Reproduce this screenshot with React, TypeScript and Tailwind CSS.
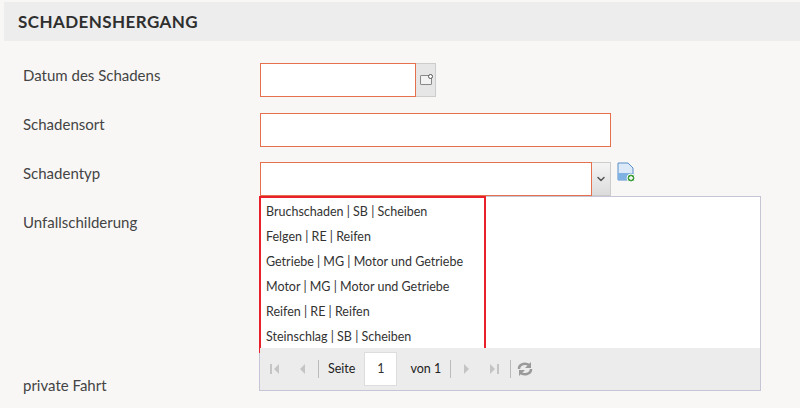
import { ChevronDown } from 'lucide-react'

const items = [
  'Bruchschaden | SB | Scheiben',
  'Felgen | RE | Reifen',
  'Getriebe | MG | Motor und Getriebe',
  'Motor | MG | Motor und Getriebe',
  'Reifen | RE | Reifen',
  'Steinschlag | SB | Scheiben'
]

function PagerBtn({ children }: { children: React.ReactNode }) {
  return (
    <div className="flex h-[22px] w-[22px] items-center justify-center rounded-sm text-[#c4c4c4]">
      {children}
    </div>
  )
}

export default function App() {
  return (
    <div className="h-[408px] w-[800px] overflow-hidden bg-[#f8f7f6] pl-1 pt-[2px] [font-family:Lato,sans-serif] text-[#444]">
      <div className="flex h-[39px] items-center bg-[#ededed] pl-[14px] text-[17px] font-bold tracking-wide text-[#2f2f2f]">
        SCHADENSHERGANG
      </div>
      <div className="relative pt-[4px]">
        <div className="flex h-[49px] items-center pt-[22px]">
          <div className="w-[256px] pl-[19px] text-[15px] -mt-[10px]">Datum des Schadens</div>
          <div className="flex -mt-[1px]">
            <div className="h-[34px] w-[156px] border border-[#e4704e] bg-white" />
            <div className="flex h-[34px] w-[20px] items-center justify-center border border-l-0 border-[#ccc] bg-[#e6e6e6]">
              <div className="relative h-[10px] w-[12px] rounded-[1px] border border-[#888] bg-[#f2f2f2]">
                <div className="absolute -right-[2px] -top-[2px] h-[5px] w-[5px] rounded-full border border-[#555] bg-white" />
              </div>
            </div>
          </div>
        </div>
        <div className="flex h-[49px] items-center pt-[22px]">
          <div className="w-[256px] pl-[19px] text-[15px] -mt-[10px]">Schadensort</div>
          <div className="h-[34px] w-[351px] border border-[#e4704e] bg-white" />
        </div>
        <div className="flex h-[49px] items-center pt-[22px]">
          <div className="w-[256px] pl-[19px] text-[15px] -mt-[10px]">Schadentyp</div>
          <div className="flex h-[34px]">
            <div className="w-[332px] border border-[#e4704e] bg-white" />
            <div className="flex w-[19px] items-center justify-center border-y border-r border-[#ccc] bg-gradient-to-b from-[#f4f4f4] to-[#dcdcdc]">
              <ChevronDown className="size-3 text-[#555]" strokeWidth={3} />
            </div>
            <svg className="ml-[5px]" width="20" height="20" viewBox="0 0 20 20">
              <path d="M2 1h10l5 5v12H2z" fill="#dbe9f8" stroke="#5b8fc9" />
              <path d="M2 11h15v7H2z" fill="#7fb1e3" />
              <circle cx="15" cy="16" r="4" fill="#3f9e3a" stroke="#fff" />
              <path d="M13 16h4M15 14v4" stroke="#fff" strokeWidth="1.4" />
            </svg>
          </div>
        </div>
        <div className="flex pt-[20px]">
          <div className="w-[255px] pl-[19px] text-[15px] leading-5">Unfallschilderung</div>
        </div>
        <div className="absolute left-[255px] top-[155px] w-[502px] border border-[#c5c5d5] bg-white [font-family:Tahoma,'DejaVu_Sans_Condensed','Liberation_Sans',sans-serif] text-[12.5px] text-[#333]">
          <div className="h-[152px]">
            <div className="-ml-px -mt-px w-[227px] border-2 border-[#e8212b] pb-[1px] pt-[2px] pl-[5px]">
              {items.map(t => (
                <div key={t} className="flex h-[25px] items-center">{t}</div>
              ))}
            </div>
          </div>
          <div className="flex h-[42px] items-center gap-[5px] bg-[#ececec] px-[4px] text-[12.5px]">
            <PagerBtn>
              <svg width="10" height="12" viewBox="0 0 10 12"><path d="M1 1v10" stroke="currentColor" strokeWidth="2" /><path d="M9 1 4 6l5 5z" fill="currentColor" /></svg>
            </PagerBtn>
            <PagerBtn>
              <svg width="8" height="12" viewBox="0 0 8 12"><path d="M7 1 2 6l5 5z" fill="currentColor" /></svg>
            </PagerBtn>
            <div className="h-[18px] w-px bg-[#bbb]" />
            <span className="px-1 text-[#222]">Seite</span>
            <div className="flex h-[34px] w-[33px] items-center justify-center border border-[#ddd] bg-white">1</div>
            <span className="px-1 pl-2 text-[#222]">von 1</span>
            <div className="h-[18px] w-px bg-[#bbb]" />
            <PagerBtn>
              <svg width="8" height="12" viewBox="0 0 8 12"><path d="M1 1l5 5-5 5z" fill="currentColor" /></svg>
            </PagerBtn>
            <PagerBtn>
              <svg width="10" height="12" viewBox="0 0 10 12"><path d="M1 1l5 5-5 5z" fill="currentColor" /><path d="M9 1v10" stroke="currentColor" strokeWidth="2" /></svg>
            </PagerBtn>
            <div className="h-[18px] w-px bg-[#bbb]" />
            <svg width="18" height="16" viewBox="0 0 18 16" className="text-[#9a9a9a]">
              <path d="M3 8a6 5 0 0 1 11-3" fill="none" stroke="currentColor" strokeWidth="2.5" />
              <path d="M15 1v6h-6z" fill="currentColor" />
              <path d="M15 8a6 5 0 0 1-11 3" fill="none" stroke="currentColor" strokeWidth="2.5" />
              <path d="M3 15V9h6z" fill="currentColor" />
            </svg>
          </div>
        </div>
        <div className="pl-[19px] pt-[142px] text-[15px]">private Fahrt</div>
      </div>
    </div>
  )
}
